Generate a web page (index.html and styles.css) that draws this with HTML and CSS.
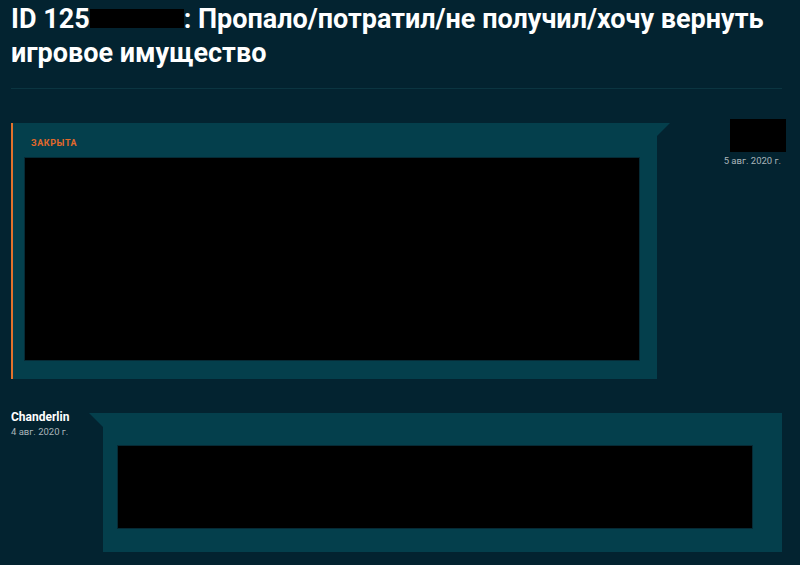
FILE: index.html
```html
<!DOCTYPE html>
<html lang="ru">
<head>
<meta charset="utf-8">
<title>ID 125</title>
<link rel="stylesheet" href="styles.css">
</head>
<body>
<div class="page">
  <h1 class="title">ID 125<span class="redact"></span>: Пропало/потратил/не получил/хочу вернуть игровое имущество</h1>
  <div class="divider"></div>

  <div class="row row-own">
    <div class="panel panel-own">
      <div class="status">ЗАКРЫТА</div>
      <div class="hidden hidden-big"></div>
    </div>
    <div class="meta meta-own">
      <div class="avatar-redact"></div>
      <div class="date">5 авг. 2020 г.</div>
    </div>
  </div>

  <div class="row row-reply">
    <div class="meta meta-reply">
      <div class="author">Chanderlin</div>
      <div class="date">4 авг. 2020 г.</div>
    </div>
    <div class="panel panel-reply">
      <div class="hidden hidden-small"></div>
    </div>
  </div>
</div>
</body>
</html>
```

FILE: styles.css
```css
html, body {
  margin: 0;
  background: #032330;
}
body {
  font-family: Roboto, "Noto Sans", sans-serif;
  color: #fff;
}
.page {
  padding: 0 18px 0 11px;
}
.title {
  margin: 2px 0 0;
  font-size: 27px;
  line-height: 34px;
  font-weight: 700;
  color: #fff;
}
.redact {
  display: inline-block;
  width: 94px;
  height: 19px;
  background: #000;
}
.divider {
  height: 1px;
  background: #0b3541;
  margin-top: 18px;
}
.row {
  display: flex;
  align-items: flex-start;
}
.row-own {
  margin-top: 30px;
}
.panel {
  position: relative;
  background: #043f4c;
  box-sizing: border-box;
}
.panel-own {
  width: 646px;
  margin-top: 4px;
  border-left: 2px solid #e2722c;
  padding: 15px 18px 19px 12px;
}
.panel-own::after {
  content: "";
  position: absolute;
  top: 0;
  left: 100%;
  width: 0;
  height: 0;
  border-top: 13px solid #043f4c;
  border-right: 13px solid transparent;
}
.status {
  margin-left: 6px;
  font-size: 9px;
  line-height: 10px;
  font-weight: 700;
  letter-spacing: 0.6px;
  color: #e2692b;
  margin-bottom: 10px;
}
.hidden {
  background: #000;
  box-shadow: 0 0 0 1px #062a35;
}
.hidden-big {
  height: 202px;
}
.hidden-small {
  height: 82px;
}
.meta-own {
  flex: 1;
  display: flex;
  flex-direction: column;
  align-items: flex-end;
}
.avatar-redact {
  width: 56px;
  height: 33px;
  background: #000;
  margin-right: -4px;
}
.date {
  font-size: 9.5px;
  line-height: 12px;
  color: #aab5ba;
}
.meta-own .date {
  margin-top: 3px;
  margin-right: 1px;
}
.row-reply {
  margin-top: 31px;
}
.meta-reply {
  width: 78px;
  flex: none;
}
.author {
  font-size: 12px;
  line-height: 14px;
  font-weight: 700;
  color: #fff;
}
.meta-reply .date {
  margin-top: 2px;
}
.panel-reply {
  flex: 1;
  margin-left: 14px;
  margin-top: 3px;
  padding: 33px 30px 24px 15px;
}
.panel-reply::before {
  content: "";
  position: absolute;
  top: 0;
  right: 100%;
  width: 0;
  height: 0;
  border-top: 14px solid #043f4c;
  border-left: 14px solid transparent;
}
```
